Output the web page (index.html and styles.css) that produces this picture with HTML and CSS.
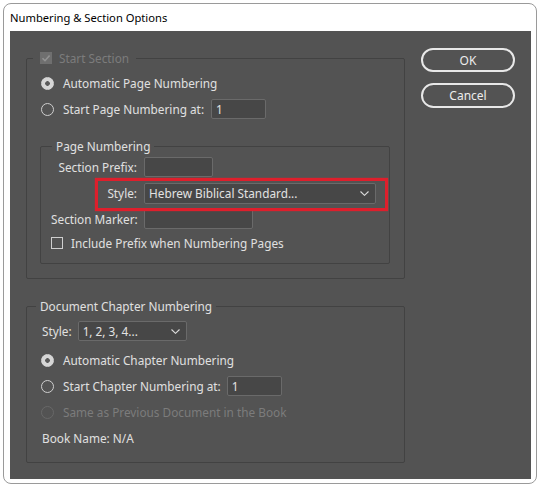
FILE: index.html
```html
<!DOCTYPE html>
<html lang="en">
<head>
<meta charset="utf-8">
<title>Numbering &amp; Section Options</title>
<link rel="stylesheet" href="styles.css">
</head>
<body>
<div class="window">
  <div class="titlebar">Numbering &amp; Section Options</div>
  <div class="panel">
    <div class="groups">
      <fieldset class="group section">
        <legend class="check-legend">
          <span class="checkbox checked disabled">
            <svg viewBox="0 0 12 12" width="12" height="12"><polyline points="2.5,6.2 5,8.7 9.6,3.4" fill="none" stroke="#939393" stroke-width="1.6"/></svg>
          </span>
          <span class="muted">Start Section</span>
        </legend>
        <div class="row"><span class="radio on"></span><span>Automatic Page Numbering</span></div>
        <div class="row"><span class="radio"></span><span>Start Page Numbering at:</span><span class="field page-start">1</span></div>

        <fieldset class="group page-numbering">
          <legend>Page Numbering</legend>
          <div class="form-row">
            <span class="label">Section Prefix:</span>
            <span class="field prefix"></span>
          </div>
          <div class="form-row style-row">
            <span class="label">Style:</span>
            <span class="field select wide">
              <span>Hebrew Biblical Standard...</span>
              <svg class="chevron" viewBox="0 0 9 5" width="9" height="5"><polyline points="0.5,0.5 4.5,4.3 8.5,0.5" fill="none" stroke="#dcdcdc" stroke-width="1.1"/></svg>
            </span>
            <span class="highlight"></span>
          </div>
          <div class="form-row">
            <span class="label">Section Marker:</span>
            <span class="field marker"></span>
          </div>
          <div class="row check-row"><span class="checkbox"></span><span>Include Prefix when Numbering Pages</span></div>
        </fieldset>
      </fieldset>

      <fieldset class="group chapter">
        <legend>Document Chapter Numbering</legend>
        <div class="row style-line">
          <span>Style:</span>
          <span class="field select narrow">
            <span>1, 2, 3, 4...</span>
            <svg class="chevron" viewBox="0 0 9 5" width="9" height="5"><polyline points="0.5,0.5 4.5,4.3 8.5,0.5" fill="none" stroke="#dcdcdc" stroke-width="1.1"/></svg>
          </span>
        </div>
        <div class="row"><span class="radio on"></span><span>Automatic Chapter Numbering</span></div>
        <div class="row"><span class="radio"></span><span>Start Chapter Numbering at:</span><span class="field chapter-start">1</span></div>
        <div class="row"><span class="radio disabled"></span><span class="muted">Same as Previous Document in the Book</span></div>
        <div class="row book">Book Name: N/A</div>
      </fieldset>
    </div>

    <div class="buttons">
      <button class="pill ok">OK</button>
      <button class="pill cancel">Cancel</button>
    </div>
  </div>
</div>
</body>
</html>
```

FILE: styles.css
```css
* { box-sizing: border-box; }

html, body {
  margin: 0;
  padding: 0;
  background: #ffffff;
}

body {
  font-family: "Noto Sans", "Open Sans", sans-serif;
  font-size: 11.8px;
  color: #e0e0e0;
}

/* window frame */
.window {
  margin: 3px 0 0 3px;
  width: 534px;
  height: 481px;
  border: 1px solid #9a9a9a;
  border-radius: 8px;
  background: #ffffff;
  padding: 0 5px 4px 6px;
}

.titlebar {
  height: 27px;
  line-height: 27px;
  color: #000;
  font-size: 11.2px;
  white-space: nowrap;
}

/* dark dialog body */
.panel {
  height: 448px;
  background: #535353;
  display: flex;
  gap: 16px;
  padding: 17px 0 0 16px;
}

.groups {
  width: 379px;
  display: flex;
  flex-direction: column;
  gap: 19px;
  padding-top: 2px;
}

/* group boxes */
.group {
  margin: 0;
  min-width: 0;
  border: 1px solid #424242;
  border-radius: 2px;
}

.group legend {
  line-height: 16px;
  padding: 0 4px;
  white-space: nowrap;
}

.section {
  width: 379px;
  padding: 4px 14px 14px 13px;
}

.section .check-legend {
  display: flex;
  align-items: center;
  gap: 7px;
  margin-left: -7px;
  padding: 0 7px;
}

.page-numbering {
  width: 350px;
  margin-top: 16px;
  padding: 0 10px 9px 10px;
}

.page-numbering legend {
  margin-left: 1px;
}

.chapter {
  width: 379px;
  padding: 4px 14px 11px 14px;
}

.chapter legend {
  margin-left: -5px;
}

/* rows */
.row {
  height: 26px;
  display: flex;
  align-items: center;
  white-space: nowrap;
}

.section > .row { padding-left: 1px; }

.radio {
  width: 13px;
  height: 13px;
  border-radius: 50%;
  border: 1px solid #cfcfcf;
  margin-right: 9px;
  flex: none;
}

.radio.on {
  background: radial-gradient(circle, #5a5a5a 0 2px, #d6d6d6 2.6px);
  border-color: #d6d6d6;
}

.radio.disabled {
  border-color: #686868;
}

.checkbox {
  width: 12px;
  height: 12px;
  border: 1px solid #cfcfcf;
  flex: none;
  display: inline-flex;
}

.checkbox.checked.disabled {
  background: #6f6f6f;
  border-color: #6f6f6f;
}

.checkbox.checked svg {
  margin: -1px;
}

.muted {
  color: #7c7c7c;
}

.field {
  height: 20px;
  background: #474747;
  border: 1px solid #6a6a6a;
  border-radius: 2px;
  display: inline-flex;
  align-items: center;
  padding-left: 4px;
  color: #e2e2e2;
  flex: none;
}

.page-start {
  width: 55px;
  margin-left: 7px;
}

.chapter-start {
  width: 55px;
  margin-left: 6px;
}

/* label / field pairs */
.form-row {
  height: 26px;
  display: flex;
  align-items: center;
  gap: 7px;
}

.form-row .label {
  width: 86px;
  text-align: right;
  white-space: nowrap;
  flex: none;
}

.prefix { width: 69px; }
.marker { width: 109px; }

.select {
  justify-content: space-between;
  padding-right: 6px;
}

.select.wide {
  width: 232px;
  height: 21px;
}

.select.narrow {
  width: 109px;
  margin-left: 6px;
}

.chevron { flex: none; }

.style-row {
  position: relative;
}

.highlight {
  position: absolute;
  left: 44px;
  top: -2px;
  width: 293px;
  height: 33px;
  border: 3px solid #de1f2c;
  box-shadow: 0 0 1px #de1f2c;
  pointer-events: none;
}

.check-row {
  height: 22px;
}

.check-row .checkbox {
  margin-right: 8px;
}

.style-line {
  margin-bottom: 3px;
  padding-left: 1px;
}

.book {
  padding-left: 1px;
}

/* buttons */
.buttons {
  width: 94px;
  display: flex;
  flex-direction: column;
  gap: 11px;
}

.pill {
  width: 94px;
  height: 24px;
  border: 2px solid #e8e8e8;
  border-radius: 13px;
  background: transparent;
  color: #ececec;
  font-family: "Noto Sans", "Open Sans", sans-serif;
  font-size: 12px;
  padding: 0;
}

.pill.cancel { height: 25px; }
```
